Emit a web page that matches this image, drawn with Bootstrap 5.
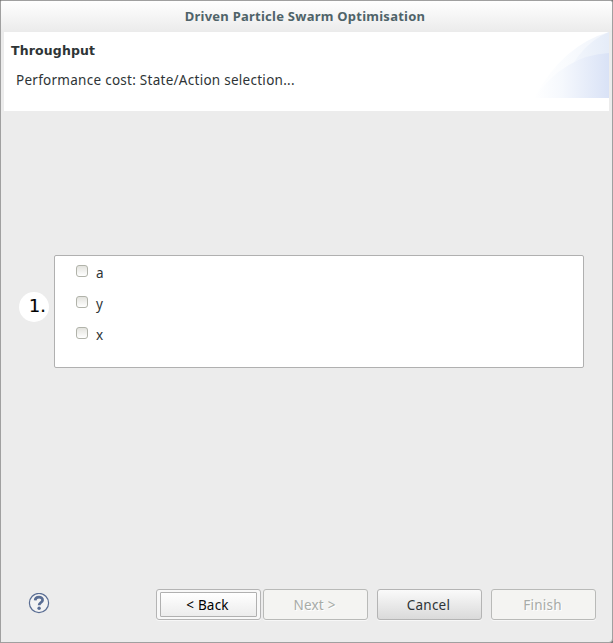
<!DOCTYPE html>
<html lang="en">
<head>
<meta charset="utf-8">
<title>Driven Particle Swarm Optimisation</title>
<link href="https://cdn.jsdelivr.net/npm/bootstrap@5.3.0/dist/css/bootstrap.min.css" rel="stylesheet">
<style>
body{background:#777;font:13.5px/20px "Noto Sans","Open Sans",sans-serif;color:#2e3436;overflow:hidden}
.dialog{height:643px;border:1px solid #a0a0a0;border-radius:2px 3px 4px 0;background:#ececec}
.titlebar{height:31px;background:linear-gradient(#fff,#ebebeb);color:#4f6369;font-weight:700;font-size:13px;letter-spacing:.25px;padding:0 3px 2px 0;border-radius:1px 2px 0 0}
.banner{height:79px;margin:0 3px}
.banner h1{font:700 12.5px/20px "DejaVu Sans",sans-serif;letter-spacing:.15px;margin:9px 0 0 7px}
.banner p{margin:9px 0 0 12px;letter-spacing:.27px}
.content{height:476px;padding-top:144px}
.step{width:30px;height:30px;margin:37px 5px 0 18px;font:17.5px/28px "DejaVu Sans",sans-serif;color:#000;padding-left:10px;white-space:nowrap;-webkit-text-stroke:.2px #000}
.choices{width:530px;height:113px;border:1px solid #b0b0b0;border-radius:2px;padding:1px 0 0 21px}
.choice{height:31px}
.choice .form-check-input{width:12px;height:12px;min-height:0;margin:0 8px 4px 0;border:1px solid #b1b3aa;border-radius:3px;background:linear-gradient(#e3e3de,#fff)}
.footer-bar{height:55px;padding:2px 16px 0 27px}
.dlg-btn{width:105px;height:31px;padding:1px 2px 0 0;border:1px solid #b4b4b4;border-radius:3px;font-size:13.5px;line-height:20px;letter-spacing:.22px;color:#2e3436;background:linear-gradient(#fafafa,#dadada);box-shadow:0 1px #f7f7f7}
.dlg-btn:disabled{opacity:1;color:#a7aba7;background:#f4f4f2;border-color:#b9bab8;text-shadow:1px 1px #fff}
.dlg-btn.focused{padding:2px 3px;color:#000;background:#f8f8f8}
.focused span{height:25px;padding:2px 2px 0 0;border:1px solid #b0b0b0;border-radius:1px;background:linear-gradient(#fff,#ececec)}
.next-btn{margin:0 9px 0 2px}
.finish-btn{margin-left:9px}
</style>
<script src="https://cdn.jsdelivr.net/npm/bootstrap@5.3.0/dist/js/bootstrap.bundle.min.js"></script>
</head>
<body>
<main class="dialog d-flex flex-column">
  <header class="titlebar d-flex align-items-center justify-content-center">Driven Particle Swarm Optimisation</header>
  <section class="banner bg-white d-flex justify-content-between align-items-start">
    <div><h1>Throughput</h1><p>Performance cost: State/Action selection...</p></div>
    <svg width="75" height="66" viewBox="0 0 75 66" aria-hidden="true">
      <defs>
        <linearGradient id="fade" gradientUnits="userSpaceOnUse" x1="0" x2="75"><stop offset="0" stop-color="#fff"/><stop offset=".4" stop-color="#f6f9fd"/><stop offset="1" stop-color="#e5ecf8"/></linearGradient>
        <linearGradient id="deep" gradientUnits="userSpaceOnUse" x1="0" x2="75"><stop offset="0" stop-color="#fff"/><stop offset=".38" stop-color="#f5f8fd"/><stop offset="1" stop-color="#d9e2f6"/></linearGradient>
      </defs>
      <path d="M0 66Q29 13 75 0V66Z" fill="url(#fade)" opacity=".6"/>
      <path d="M24 66Q40 14 75 0V66Z" fill="url(#fade)"/>
      <path d="M0 66Q31 23 75 21V66Z" fill="url(#deep)"/>
    </svg>
  </section>
  <section class="content d-flex align-items-start">
    <div class="step bg-white rounded-circle">1.</div>
    <div class="choices bg-white">
      <label class="choice d-flex align-items-center"><input class="form-check-input" type="checkbox">a</label>
      <label class="choice d-flex align-items-center"><input class="form-check-input" type="checkbox">y</label>
      <label class="choice d-flex align-items-center"><input class="form-check-input" type="checkbox">x</label>
    </div>
  </section>
  <footer class="footer-bar d-flex align-items-start">
    <svg class="me-auto mt-1" width="22" height="22" viewBox="0 0 22 22" fill="none" role="img" aria-label="Help">
      <circle cx="11" cy="10" r="9.6" fill="#f3f3f3" stroke="#596d93" stroke-width="1.2"/>
      <path d="M7.2 7.4C7.3 3.2 14.8 3.2 14.6 7.1C14.5 9.6 11.2 9.5 11.1 12.3" stroke="#596d93" stroke-width="2.7"/>
      <circle cx="11.1" cy="15.3" r="1.7" fill="#596d93"/>
    </svg>
    <button class="btn dlg-btn focused"><span class="d-block">&lt; Back</span></button>
    <button class="btn dlg-btn next-btn" disabled>Next &gt;</button>
    <button class="btn dlg-btn">Cancel</button>
    <button class="btn dlg-btn finish-btn" disabled>Finish</button>
  </footer>
</main>
</body>
</html>
